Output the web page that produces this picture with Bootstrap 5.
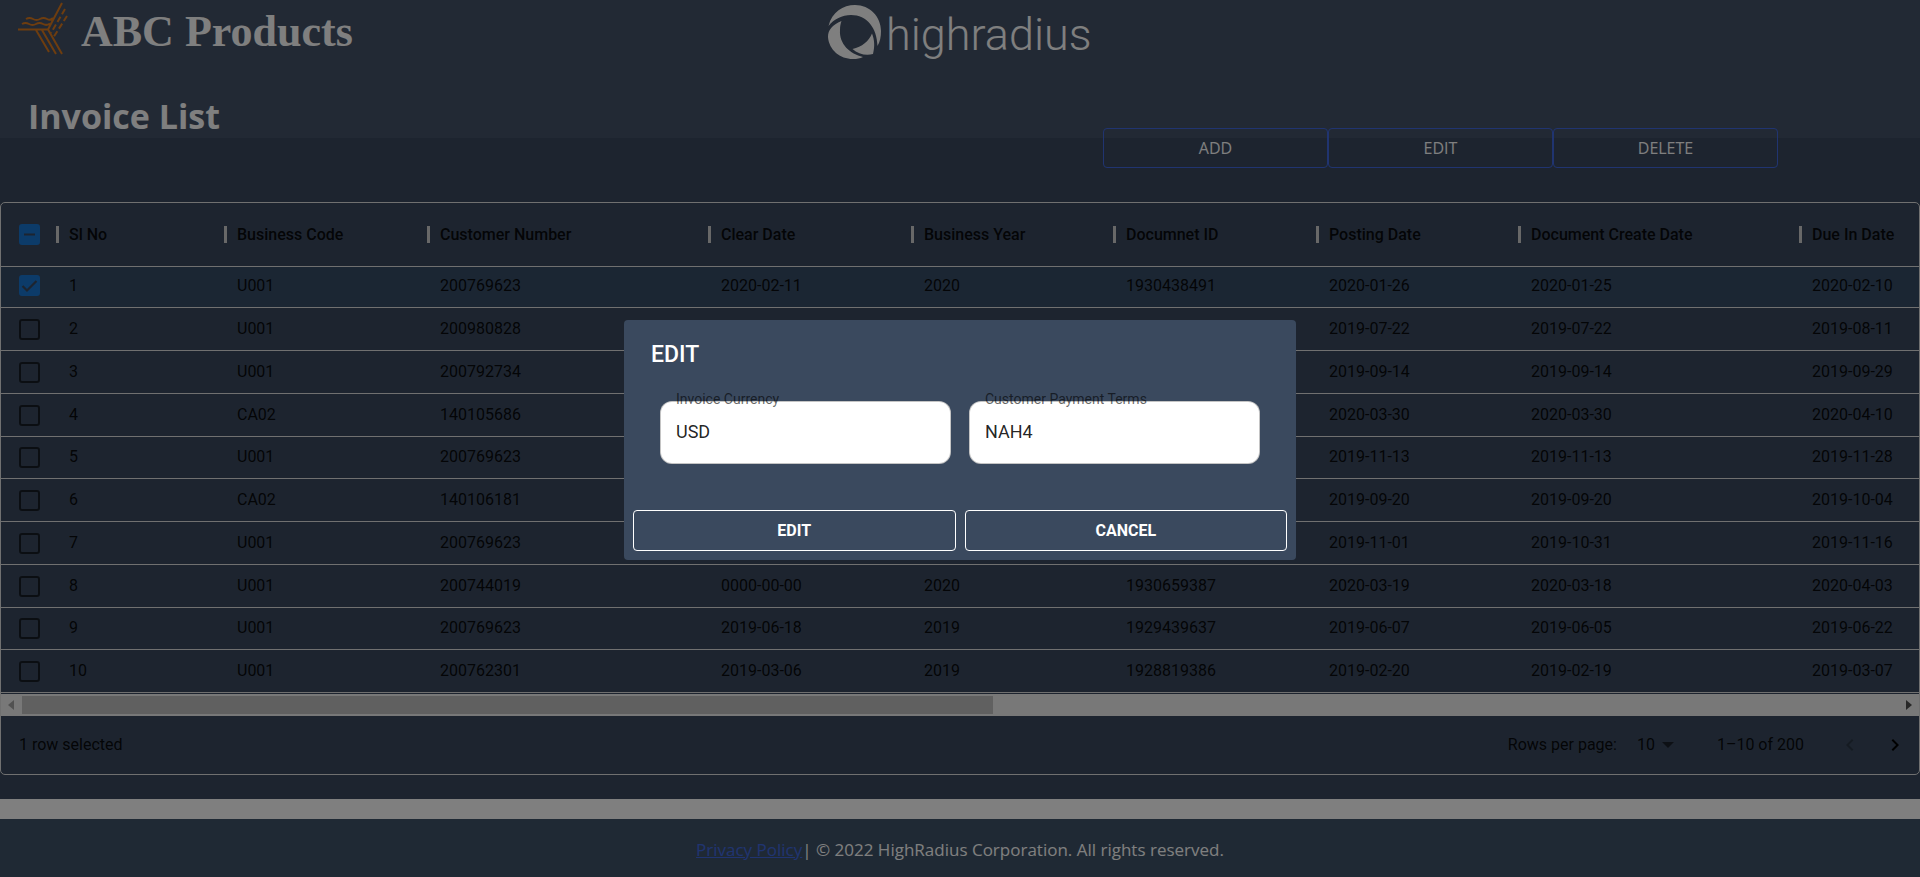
<!DOCTYPE html>
<html lang="en">
<head>
<meta charset="utf-8">
<meta name="viewport" content="width=device-width, initial-scale=1">
<title>Invoice List</title>
<link href="https://cdn.jsdelivr.net/npm/bootstrap@5.3.0/dist/css/bootstrap.min.css" rel="stylesheet">
<style>
  :root { --slate: #3a495e; --slate-light: #445268; --royal: #4169e1; --rule: #e0e0e0; }
  body { background: #fff; font-family: "Open Sans", "Noto Sans", sans-serif; overflow: hidden; }
  .top-band { background: linear-gradient(var(--slate-light) 138px, var(--slate) 138px); }
  .brand-row { height: 64px; }
  .brand-name { font: 700 44px/64px "Liberation Serif", serif; color: #fff; margin-left: 9px; }
  .logo-ring { margin-left: 26px; }
  .wordmark { font: 300 45px/70px Roboto, sans-serif; color: #fff; margin-left: 2px; }
  .page-title { font-size: 34px; line-height: 48px; font-weight: 700; color: #fff; padding: 28px 0 0 28px; }
  .action-bar { margin-right: 142px; margin-top: -12px; }
  .action-bar .btn { width: 225px; height: 40px; border: 1px solid var(--royal); border-radius: 4px; color: #fff; font-size: 16px; }
  .grid-area { background: var(--slate); padding: 34px 0 24px; }
  .data-grid { border: 1px solid var(--rule); border-radius: 5px; font: 400 16px/24px Roboto, sans-serif; color: rgba(0,0,0,.87); }
  .data-grid table { table-layout: fixed; width: 100%; border-collapse: separate; border-spacing: 0; }
  .data-grid th, .data-grid td { padding: 0 0 0 12px; border-bottom: 1px solid var(--rule); white-space: nowrap; }
  .data-grid th { height: 64px; font-weight: 500; position: relative; }
  .data-grid th + th::before { content: ""; position: absolute; left: -1px; top: 23px; width: 3px; height: 17px; background: #d0d0d0; }
  .data-grid td { height: 43px; padding-bottom: 1px; }
  .data-grid tr:nth-child(4n+1) td { height: 42px; }
  .data-grid tbody tr:first-child td { height: 41px; padding-bottom: 3px; background: rgba(25,118,210,.08); }
  .data-grid th.pick, .data-grid td.pick { padding: 0 0 0 18px; }
  .c-pick { width: 56px; } .c-no { width: 168px; } .c-std { width: 203px; } .c-mid { width: 202px; } .c-wide { width: 281px; }
  .tick { appearance: none; display: block; width: 21px; height: 21px; margin: 0; border: 2px solid rgba(0,0,0,.6); border-radius: 3px; background: center/17px no-repeat; }
  .tick:checked, .tick.some { border-color: #1976d2; background-color: #1976d2; }
  .tick:checked { background-image: url("data:image/svg+xml,%3Csvg xmlns='http://www.w3.org/2000/svg' viewBox='0 0 17 17'%3E%3Cpath d='M1.5 9l4.5 4.5L15.500 4' fill='none' stroke='%233a495e' stroke-width='2.200'/%3E%3C/svg%3E"); }
  .tick.some { background-image: url("data:image/svg+xml,%3Csvg xmlns='http://www.w3.org/2000/svg' viewBox='0 0 17 17'%3E%3Cpath d='M3 8.500h11' stroke='%233a495e' stroke-width='2.200'/%3E%3C/svg%3E"); }
  .scroll-track { background: #f1f1f1; height: 22px; margin-top: 1px; padding: 2px 7px; }
  .scroll-thumb { background: #c1c1c1; height: 18px; width: 51%; margin-left: 8px; }
  .grid-foot { height: 58px; padding: 0 12px 0 18px; }
  .rows-pick { margin-left: 20px; }
  .rows-select { appearance: none; background: none; border: 0; padding: 0; color: inherit; font: inherit; width: 37px; }
  .range-text { margin-left: 43px; }
  .arrow-btn { background: none; border: 0; padding: 0; width: 24px; height: 24px; line-height: 0; color: #000; }
  .arrow-btn:disabled { color: rgba(0,0,0,.26); }
  .prev-btn { margin-left: 34px; }
  .next-btn { margin-left: 21px; }
  .site-foot { background: #3f5368; color: #fff; margin-top: 20px; height: 58px; font-size: 17px; padding-top: 3px; }
  .site-foot a { color: var(--royal); }
  .edit-dialog { max-width: 672px; margin: 320px auto 0; }
  .edit-dialog .modal-content { background: var(--slate); color: #fff; border: 0; border-radius: 4px; font-family: Roboto, sans-serif; padding: 9px; }
  .dialog-title { font-size: 23px; line-height: 32px; font-weight: 500; margin: 10px 0 30px 18px; }
  .field-row { gap: 18px; padding: 0 27px; }
  .field-box { position: relative; flex: 1 1 0; }
  .field-box label { position: absolute; left: 16px; top: -11px; font-size: 14px; line-height: 18px; color: rgba(0,0,0,.6); }
  .field-box input { display: block; width: 100%; height: 63px; border: 1px solid rgba(0,0,0,.23); border-radius: 12px; padding: 0 15px 2px; font-size: 18px; color: rgba(0,0,0,.87); background: #fff; }
  .button-row { gap: 9px; margin-top: 46px; }
  .edit-dialog .btn { flex: 1 1 0; height: 41px; border: 1px solid #fff; border-radius: 4px; color: #fff; font-weight: 700; font-size: 16px; }
</style>
</head>
<body>
<header class="top-band">
  <div class="brand-row row g-0">
    <div class="col-5 d-flex">
      <svg class="ms-3 flex-shrink-0" width="56" height="58" viewBox="16 0 56 58" fill="none" stroke="#dc7a1e" stroke-width="2">
        <path d="M62 3L48 29.500L62 54M18 29.500H48M36 30L49 52M42 30L56 54M26 19q3.500-2 7 0t7 0t7 0t6-1M22 24q3.500-2 7 0t7 0t7 0t7-.5"/>
        <path d="M65 9L51 33M67 16L53 38" stroke-dasharray="6 3"/>
      </svg>
      <span class="brand-name">ABC Products</span>
    </div>
    <div class="col-7 d-flex">
      <svg class="flex-shrink-0 logo-ring" width="58" height="62" viewBox="826 0 58 62" fill="#fff">
        <path d="M828.500 26C832 12 843 5 855 5C870 5 881 17 881 31C881 37 880 42 877.500 46C877 28 867 15 851 15C842 15 834 19 828.500 26Z"/>
        <path d="M841.500 21C832 25 828 30 828 37C829 50 840 59 853 59C857 59 860 58.500 863 57C850 54 839 44 840 30C840 26 840.500 24 841.500 21Z"/>
        <path d="M872 33.500C869 41 862 47 852.500 49C858 54 866 56 873 54C875 46 874.500 40 872 33.500Z"/>
      </svg>
      <span class="wordmark">highradius</span>
    </div>
  </div>
  <h1 class="page-title mb-0">Invoice List</h1>
  <div class="action-bar d-flex justify-content-end">
    <button class="btn" type="button">ADD</button><button class="btn" type="button">EDIT</button><button class="btn" type="button">DELETE</button>
  </div>
</header>
<main class="grid-area">
  <div class="data-grid">
    <table>
      <colgroup><col class="c-pick"><col class="c-no"><col class="c-std"><col class="c-wide"><col class="c-std"><col class="c-mid"><col class="c-std"><col class="c-mid"><col class="c-wide"><col></colgroup>
      <thead><tr><th class="pick"><input class="tick some" type="checkbox" aria-label="Select all rows"></th><th>Sl No</th><th>Business Code</th><th>Customer Number</th><th>Clear Date</th><th>Business Year</th><th>Documnet ID</th><th>Posting Date</th><th>Document Create Date</th><th>Due In Date</th></tr></thead>
      <tbody>
        <tr><td class="pick"><input class="tick" type="checkbox" aria-label="Select row 1" checked></td><td>1</td><td>U001</td><td>200769623</td><td>2020-02-11</td><td>2020</td><td>1930438491</td><td>2020-01-26</td><td>2020-01-25</td><td>2020-02-10</td></tr>
        <tr><td class="pick"><input class="tick" type="checkbox" aria-label="Select row 2"></td><td>2</td><td>U001</td><td>200980828</td><td></td><td></td><td></td><td>2019-07-22</td><td>2019-07-22</td><td>2019-08-11</td></tr>
        <tr><td class="pick"><input class="tick" type="checkbox" aria-label="Select row 3"></td><td>3</td><td>U001</td><td>200792734</td><td></td><td></td><td></td><td>2019-09-14</td><td>2019-09-14</td><td>2019-09-29</td></tr>
        <tr><td class="pick"><input class="tick" type="checkbox" aria-label="Select row 4"></td><td>4</td><td>CA02</td><td>140105686</td><td></td><td></td><td></td><td>2020-03-30</td><td>2020-03-30</td><td>2020-04-10</td></tr>
        <tr><td class="pick"><input class="tick" type="checkbox" aria-label="Select row 5"></td><td>5</td><td>U001</td><td>200769623</td><td></td><td></td><td></td><td>2019-11-13</td><td>2019-11-13</td><td>2019-11-28</td></tr>
        <tr><td class="pick"><input class="tick" type="checkbox" aria-label="Select row 6"></td><td>6</td><td>CA02</td><td>140106181</td><td></td><td></td><td></td><td>2019-09-20</td><td>2019-09-20</td><td>2019-10-04</td></tr>
        <tr><td class="pick"><input class="tick" type="checkbox" aria-label="Select row 7"></td><td>7</td><td>U001</td><td>200769623</td><td></td><td></td><td></td><td>2019-11-01</td><td>2019-10-31</td><td>2019-11-16</td></tr>
        <tr><td class="pick"><input class="tick" type="checkbox" aria-label="Select row 8"></td><td>8</td><td>U001</td><td>200744019</td><td>0000-00-00</td><td>2020</td><td>1930659387</td><td>2020-03-19</td><td>2020-03-18</td><td>2020-04-03</td></tr>
        <tr><td class="pick"><input class="tick" type="checkbox" aria-label="Select row 9"></td><td>9</td><td>U001</td><td>200769623</td><td>2019-06-18</td><td>2019</td><td>1929439637</td><td>2019-06-07</td><td>2019-06-05</td><td>2019-06-22</td></tr>
        <tr><td class="pick"><input class="tick" type="checkbox" aria-label="Select row 10"></td><td>10</td><td>U001</td><td>200762301</td><td>2019-03-06</td><td>2019</td><td>1928819386</td><td>2019-02-20</td><td>2019-02-19</td><td>2019-03-07</td></tr>
      </tbody>
    </table>
    <div class="scroll-track d-flex align-items-center">
      <svg width="6" height="10" viewBox="0 0 6 10"><path d="M6 0v10L0 5z" fill="#a3a3a3"/></svg>
      <div class="scroll-thumb"></div>
      <svg class="ms-auto" width="6" height="10" viewBox="0 0 6 10"><path d="M0 0v10L6 5z" fill="#505050"/></svg>
    </div>
    <div class="grid-foot d-flex align-items-center">
      <span class="me-auto">1 row selected</span>
      <label for="rows">Rows per page:</label>
      <span class="rows-pick d-flex align-items-center position-relative">
        <select id="rows" class="rows-select"><option>10</option></select>
        <svg class="position-absolute end-0" width="12" height="6" viewBox="0 0 12 6"><path d="M0 0h12L6 6z" fill="rgba(0,0,0,.54)"/></svg>
      </span>
      <span class="range-text">1–10 of 200</span>
      <button class="arrow-btn prev-btn" type="button" aria-label="Previous page" disabled><svg width="24" height="24" viewBox="0 0 24 24" fill="currentColor"><path d="M15.410 7.410L14 6l-6 6 6 6 1.410-1.410L10.830 12z"/></svg></button>
      <button class="arrow-btn next-btn" type="button" aria-label="Next page"><svg width="24" height="24" viewBox="0 0 24 24" fill="currentColor"><path d="M10 6L8.590 7.410 13.170 12l-4.580 4.590L10 18l6-6z"/></svg></button>
    </div>
  </div>
</main>
<footer class="site-foot d-flex justify-content-center align-items-center"><a href="#">Privacy Policy</a><span>| © 2022 HighRadius Corporation. All rights reserved.</span></footer>

<div class="modal-backdrop show"></div>
<div class="modal show d-block" tabindex="-1" role="dialog" aria-modal="true" aria-labelledby="dialogTitle">
  <div class="modal-dialog edit-dialog">
    <form class="modal-content">
      <h2 class="dialog-title" id="dialogTitle">EDIT</h2>
      <div class="d-flex field-row">
        <div class="field-box"><input id="currency" type="text" value="USD"><label for="currency">Invoice Currency</label></div>
        <div class="field-box"><input id="terms" type="text" value="NAH4"><label for="terms">Customer Payment Terms</label></div>
      </div>
      <div class="d-flex button-row">
        <button class="btn" type="button">EDIT</button>
        <button class="btn" type="button">CANCEL</button>
      </div>
    </form>
  </div>
</div>
<script src="https://cdn.jsdelivr.net/npm/bootstrap@5.3.0/dist/js/bootstrap.bundle.min.js"></script>
</body>
</html>
